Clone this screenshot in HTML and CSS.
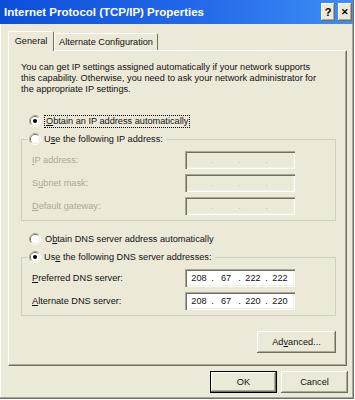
FILE: index.html
```html
<!DOCTYPE html>
<html lang="en">
<head>
    <meta charset="UTF-8">
    <title>Internet Protocol (TCP/IP) Properties</title>
    <link rel="stylesheet" href="styles.css">
</head>
<body>
    <svg class="defs" width="0" height="0">
        <symbol id="radio" viewBox="0 0 12 12">
            <path d="M2.11 9.89 A5.5 5.5 0 0 1 9.89 2.11" fill="none" stroke="#aca899"/>
            <path d="M9.89 2.11 A5.5 5.5 0 0 1 2.11 9.89" fill="none" stroke="#fff"/>
            <path d="M2.82 9.18 A4.5 4.5 0 0 1 9.18 2.82" fill="none" stroke="#716f64"/>
            <path d="M9.18 2.82 A4.5 4.5 0 0 1 2.82 9.18" fill="none" stroke="#f1efe2"/>
            <circle cx="6" cy="6" r="4" fill="#fff"/>
        </symbol>
        <symbol id="radio-on" viewBox="0 0 12 12">
            <use href="#radio"/>
            <circle cx="6" cy="6" r="2" fill="#000"/>
        </symbol>
    </svg>

    <div class="window">
        <div class="titlebar">
            <span class="title">Internet Protocol (TCP/IP) Properties</span>
            <div class="caption-buttons">
                <span class="cap-btn">?</span>
                <span class="cap-btn close">&#x2715;</span>
            </div>
        </div>

        <div class="tabs">
            <div class="tab active">General</div>
            <div class="tab alt">Alternate Configuration</div>
        </div>

        <div class="panel">
            <p class="intro">You can get IP settings assigned automatically if your network supports<br>this capability. Otherwise, you need to ask your network administrator for<br>the appropriate IP settings.</p>

            <div class="option first">
                <svg class="radio"><use href="#radio-on"/></svg>
                <span class="focus"><u>O</u>btain an IP address automatically</span>
            </div>

            <div class="group">
                <div class="group-head">
                    <svg class="radio"><use href="#radio"/></svg>
                    <span>U<u>s</u>e the following IP address:</span>
                </div>
                <div class="fields disabled">
                    <span><u>I</u>P address:</span>
                    <div class="ip"><span></span><span>.</span><span></span><span>.</span><span></span><span>.</span><span></span></div>
                    <span>S<u>u</u>bnet mask:</span>
                    <div class="ip"><span></span><span>.</span><span></span><span>.</span><span></span><span>.</span><span></span></div>
                    <span><u>D</u>efault gateway:</span>
                    <div class="ip"><span></span><span>.</span><span></span><span>.</span><span></span><span>.</span><span></span></div>
                </div>
            </div>

            <div class="option">
                <svg class="radio"><use href="#radio"/></svg>
                <span class="label">O<u>b</u>tain DNS server address automatically</span>
            </div>

            <div class="group">
                <div class="group-head">
                    <svg class="radio"><use href="#radio-on"/></svg>
                    <span>Us<u>e</u> the following DNS server addresses:</span>
                </div>
                <div class="fields">
                    <span><u>P</u>referred DNS server:</span>
                    <div class="ip enabled"><span>208</span><span>.</span><span>67</span><span>.</span><span>222</span><span>.</span><span>222</span></div>
                    <span><u>A</u>lternate DNS server:</span>
                    <div class="ip enabled"><span>208</span><span>.</span><span>67</span><span>.</span><span>220</span><span>.</span><span>220</span></div>
                </div>
            </div>

            <div class="advanced-row">
                <button class="btn advanced">Ad<u>v</u>anced...</button>
            </div>
        </div>

        <div class="footer">
            <button class="btn default">OK</button>
            <button class="btn">Cancel</button>
        </div>
    </div>
</body>
</html>
```

FILE: styles.css
```css
/* Global */
* {
    box-sizing: border-box;
}

body {
    margin: 0;
    background-color: #fff;
    font-family: 'Liberation Sans', Arial, sans-serif;
    font-size: 9.2px;
    color: #111;
}

.defs {
    display: block;
    width: 0;
    height: 0;
}

u {
    text-decoration-thickness: 1px;
    text-underline-offset: 1px;
}

/* Window frame */
.window {
    width: 354px;
    height: 399px;
    background-color: #ece9d8;
    border-right: 1px solid #716f64;
    border-bottom: 1px solid #716f64;
    box-shadow: inset -1px -1px #aca899, inset 1px 0 #fff;
    display: flex;
    flex-direction: column;
}

.titlebar {
    height: 24px;
    background: linear-gradient(to right, #0b4fd9, #2368e8 55%, #3d8ff6);
    display: flex;
    align-items: center;
    justify-content: space-between;
    padding: 0 1px 0 4px;
}

.title {
    color: #fff;
    font-weight: bold;
    font-size: 11.5px;
}

.caption-buttons {
    display: flex;
    gap: 3px;
}

.cap-btn {
    width: 14px;
    height: 18px;
    background-color: #ece9d8;
    box-shadow: inset -1px -1px #716f64, inset 1px 1px #fff, inset -2px -2px #aca899;
    display: flex;
    align-items: center;
    justify-content: center;
    font-weight: bold;
    font-size: 11px;
    padding-bottom: 1px;
    color: #000;
}

.cap-btn.close {
    font-size: 9px;
}

/* Tabs */
.tabs {
    display: flex;
    align-items: flex-end;
    height: 19px;
    margin-top: 7px;
    padding-left: 8px;
}

.tab {
    height: 17px;
    border-top: 1px solid #fff;
    border-left: 1px solid #fff;
    border-right: 1px solid #716f64;
    border-radius: 2px 2px 0 0;
    text-align: center;
    line-height: 16px;
}

.tab.active {
    width: 46px;
    height: 20px;
    margin-bottom: -1px;
    line-height: 18px;
    background-color: #ece9d8;
    position: relative;
    z-index: 1;
}

.tab.alt {
    width: 104px;
}

/* Tab page */
.panel {
    margin-left: 8px;
    width: 339px;
    height: 316px;
    border-top: 1px solid #fff;
    border-left: 1px solid #fff;
    border-right: 1px solid #716f64;
    border-bottom: 1px solid #716f64;
    box-shadow: inset -1px -1px #aca899;
}

.intro {
    margin: 11px 12px 0 12px;
    line-height: 11px;
}

.radio {
    width: 12px;
    height: 12px;
    flex: none;
}

.option {
    display: flex;
    align-items: center;
    gap: 3px;
    height: 14px;
    margin: 11px 0 0 20px;
}

.option.first {
    margin-top: 19px;
}

.option .label {
    padding: 0 1px;
}

.focus {
    border: 1px dotted #000;
    padding: 0 1px;
    line-height: 11px;
}

/* Group boxes */
.group {
    margin: 11px 10px 0 12px;
    border: 1px solid #d0d0bf;
    padding: 0 0 5px 10px;
}

.group-head {
    display: flex;
    align-items: center;
    gap: 3px;
    width: max-content;
    height: 14px;
    margin: -8px 0 0 -4px;
    padding: 0 3px 0 1px;
    background-color: #ece9d8;
}

.fields {
    display: grid;
    grid-template-columns: 153px 110px;
    row-gap: 5px;
    align-items: center;
    margin-top: 5px;
}

.fields.disabled {
    color: #aca899;
}

.ip {
    height: 18px;
    background-color: #ece9d8;
    box-shadow: inset 1px 1px #aca899, inset 2px 2px #716f64, inset -1px -1px #fff, inset -2px -2px #f1efe2;
    display: grid;
    grid-template-columns: 22px 5px 22px 5px 22px 5px 22px;
    align-items: center;
    text-align: center;
    padding-left: 3px;
    color: #c8c4b4;
}

.ip.enabled {
    background-color: #fff;
    color: #111;
}

/* Buttons */
.btn {
    font-family: inherit;
    font-size: inherit;
    color: #111;
    height: 22px;
    background-color: #ece9d8;
    border: none;
    padding: 0;
    box-shadow: inset -1px -1px #716f64, inset 1px 1px #fff, inset -2px -2px #aca899;
}

.advanced-row {
    display: flex;
    justify-content: flex-end;
    margin: 15px 10px 0 0;
}

.btn.advanced {
    width: 79px;
}

.footer {
    display: flex;
    justify-content: flex-end;
    gap: 4px;
    padding: 5px 5px 0 0;
}

.footer .btn {
    width: 67px;
}

.btn.default {
    border: 1px solid #000;
    box-shadow: inset -1px -1px #716f64, inset 1px 1px #fff, inset -2px -2px #aca899;
}
```
